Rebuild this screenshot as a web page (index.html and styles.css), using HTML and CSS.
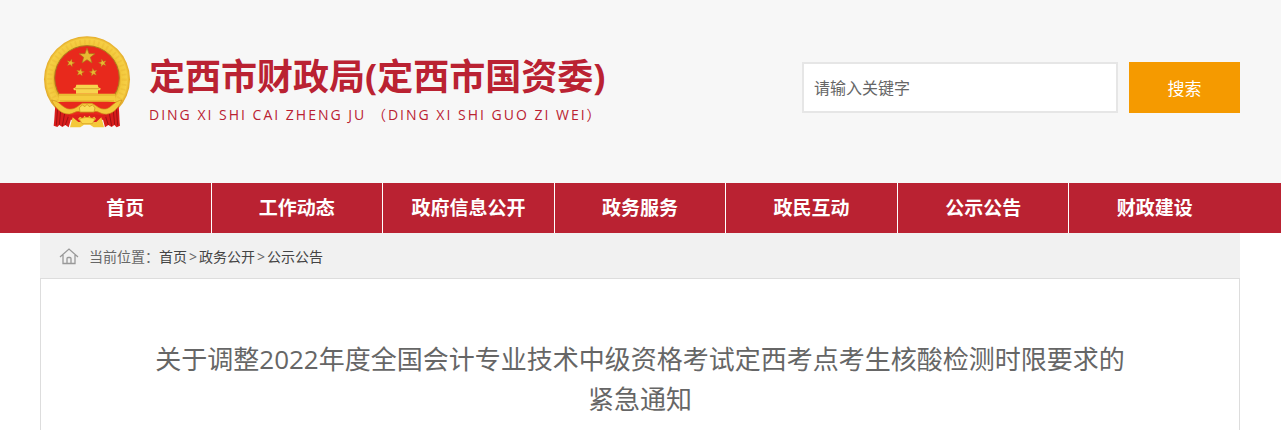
FILE: index.html
```html
<!DOCTYPE html>
<html lang="zh-CN">
<head>
  <meta charset="UTF-8">
  <meta name="viewport" content="width=device-width, initial-scale=1.0">
  <title>定西市财政局(定西市国资委)</title>
  <link rel="stylesheet" href="styles.css">
</head>
<body>
  <header class="header">
    <div class="wrap">
      <div class="header-inner">
        <a class="logo" href="#">
          <svg class="emblem" viewBox="39 33 264 282" aria-hidden="true">
            <defs>
              <radialGradient id="gold" cx="171" cy="162" r="130" gradientUnits="userSpaceOnUse">
                <stop offset="0.72" stop-color="#d99a1c"/>
                <stop offset="0.8" stop-color="#f3c93c"/>
                <stop offset="0.92" stop-color="#f6cf45"/>
                <stop offset="1" stop-color="#dfa322"/>
              </radialGradient>
              <path id="star" d="M0-25 6-8 24-8 10 3 15 20 0 10-15 20-10 3-24-8-6-8Z"/>
            </defs>
            <circle cx="171" cy="163" r="129" fill="url(#gold)"/>
            <circle cx="171" cy="163" r="112" fill="none" stroke="#e3ad2b" stroke-width="15" stroke-dasharray="5 9" opacity=".3"/>
            <circle cx="171" cy="159" r="97" fill="#e8291c" stroke="#a97a1d" stroke-width="3"/>
            <g fill="#e9b832" stroke="#a97518" stroke-width="2">
              <use href="#star" x="171" y="94"/>
              <use href="#star" transform="translate(122 114) rotate(15) scale(.5)"/>
              <use href="#star" transform="translate(218 114) rotate(-15) scale(.5)"/>
              <use href="#star" transform="translate(151 142) rotate(10) scale(.5)"/>
              <use href="#star" transform="translate(190 142) rotate(-10) scale(.5)"/>
            </g>
            <path d="M139 179H203L205 187 213 191 209 196H204V206H138V196H133L129 191 137 187Z" fill="#f7d44e"/>
            <path d="M135 191H208" stroke="#c98b1b" stroke-width="2"/>
            <path d="M87 206H255V230H87Z" fill="#f5cc3e"/>
            <path d="M87 210H255M90 228H252" stroke="#d5981f" stroke-width="2"/>
            <path d="M83 231H259L235 270 171 284 105 270Z" fill="#e8291c"/>
            <!-- ribbons on both sides -->
            <path d="M79 230C73 250 75 277 71 302L82 306 88 300 97 306 106 300 116 307 126 272 105 258Z" fill="#d91d1b"/>
            <path d="M263 230C269 250 267 277 270 302L260 307 253 300 245 306 235 300 225 307 216 272 236 258Z" fill="#d91d1b"/>
            <path d="M83 249 79 301M92 258 88 299M104 265 97 303M116 272 106 300M259 249 263 301M250 258 254 299M238 265 245 303M226 272 235 300" stroke="#9e1213" stroke-width="3"/>
            <path d="M65 225C88 228 93 244 112 251 129 256 141 246 148 241L157 235H186L196 241C205 248 215 255 231 251 247 245 253 228 276 225 266 250 245 271 222 267 208 265 200 255 191 261H151C142 255 133 265 119 267 96 269 75 250 65 225Z" fill="#f4c83a" stroke="#cc8c1c" stroke-width="2"/>
            <path d="M150 261 148 248 157 240 165 245 171 238 178 245 187 240 195 248 192 261Z" fill="#fbdc58" stroke="#c98b1b" stroke-width="2"/>
            <path d="M112 272 149 268H193L230 272 213 289 171 296 129 289Z" fill="#dd211b"/>
            <path d="M128 277 145 291 155 292 144 282 150 275 159 281 163 272 171 279 179 272 183 281 193 275 198 282 187 292 199 291 214 277 222 307H191L180 299H162L151 307H120Z" fill="#f4c83a"/>
            <path d="M148 282 156 296H187L195 282 184 279 171 277 158 279Z" fill="#fbd84d" stroke="#d5981f" stroke-width="2"/>
          </svg>
          <span class="logo-text">
            <strong class="site-name">定西市财政局(定西市国资委)</strong>
            <span class="site-pinyin">DING XI SHI CAI ZHENG JU （DING XI SHI GUO ZI WEI）</span>
          </span>
        </a>
        <form class="search">
          <input type="text" class="search-input" placeholder="请输入关键字" aria-label="请输入关键字">
          <button type="submit" class="search-btn">搜索</button>
        </form>
      </div>
    </div>
  </header>

  <nav class="nav">
    <div class="wrap">
      <ul class="nav-list">
        <li><a href="#">首页</a></li>
        <li><a href="#">工作动态</a></li>
        <li><a href="#">政府信息公开</a></li>
        <li><a href="#">政务服务</a></li>
        <li><a href="#">政民互动</a></li>
        <li><a href="#">公示公告</a></li>
        <li><a href="#">财政建设</a></li>
      </ul>
    </div>
  </nav>

  <main class="wrap">
    <div class="position">
      <svg class="home-icon" viewBox="0 0 20 18" aria-hidden="true">
        <path d="M1 10 10 2 19 10M4 8V16.5H16V8M8 16V11.5Q8 10.5 9 10.5H11Q12 10.5 12 11.5V16"/>
      </svg>
      <span class="position-label">当前位置：</span>
      <span class="crumbs"><a href="#">首页</a><span>&gt;</span><a href="#">政务公开</a><span>&gt;</span><a href="#">公示公告</a></span>
    </div>
    <article class="article">
      <h1>关于调整2022年度全国会计专业技术中级资格考试定西考点考生核酸检测时限要求的紧急通知</h1>
    </article>
  </main>
</body>
</html>
```
FILE: styles.css
```css
* {
  box-sizing: border-box;
}
body {
  margin: 0;
  background: #fff;
  color: #666;
  font-family: "Open Sans", "Noto Sans CJK SC", sans-serif;
  font-size: 14px;
}
a {
  color: inherit;
  text-decoration: none;
}
.wrap {
  max-width: 1201px;
  margin: 0 auto;
  padding-right: 1px;
}
.header {
  background: #f7f7f7;
}
.header-inner {
  display: flex;
  justify-content: space-between;
  align-items: flex-start;
  padding: 36px 0 53px;
}
.logo {
  display: flex;
  gap: 18px;
  padding-left: 3px;
  color: #ba2232;
}
.emblem {
  width: 88px;
  height: 94px;
}
.logo-text {
  display: flex;
  flex-direction: column;
  padding-top: 15px;
}
.site-name {
  font-size: 36px;
  line-height: 52px;
  white-space: nowrap;
}
.site-pinyin {
  font-size: 14px;
  line-height: 24px;
  letter-spacing: 2px;
  white-space: nowrap;
}
.search {
  display: flex;
  gap: 11px;
  padding-top: 26px;
}
.search-input {
  width: 316px;
  height: 51px;
  padding: 0 10px;
  border: 2px solid #e6e6e6;
  background: #fff;
  color: #666;
  font-family: inherit;
  font-size: 16px;
}
.search-input::placeholder {
  color: #666;
}
.search-btn {
  width: 111px;
  height: 51px;
  border: none;
  background: #f59a00;
  color: #fff;
  font-family: inherit;
  font-size: 17px;
  cursor: pointer;
}
.nav {
  background: #ba2232;
}
.nav-list {
  display: flex;
  margin: 0;
  padding: 0;
  list-style: none;
}
.nav-list li {
  flex: 1;
  border-right: 1px solid #fff;
}
.nav-list li:last-child {
  border-right: none;
}
.nav-list a {
  display: block;
  color: #fff;
  font-size: 19px;
  font-weight: bold;
  line-height: 50px;
  text-align: center;
}
.position {
  display: flex;
  align-items: center;
  height: 45px;
  padding-left: 19px;
  background: #f1f1f1;
}
.home-icon {
  width: 20px;
  height: 18px;
  margin-right: 10px;
  fill: none;
  stroke: #999;
  stroke-width: 1.3;
}
.crumbs a {
  color: #444;
}
.crumbs span {
  margin: 0 2px;
}
.article {
  padding: 60px 110px 11px;
  border: 1px solid #ddd;
  border-bottom: none;
}
.article h1 {
  margin: 0;
  font-size: 26px;
  font-weight: normal;
  line-height: 40px;
  text-align: center;
}
```
